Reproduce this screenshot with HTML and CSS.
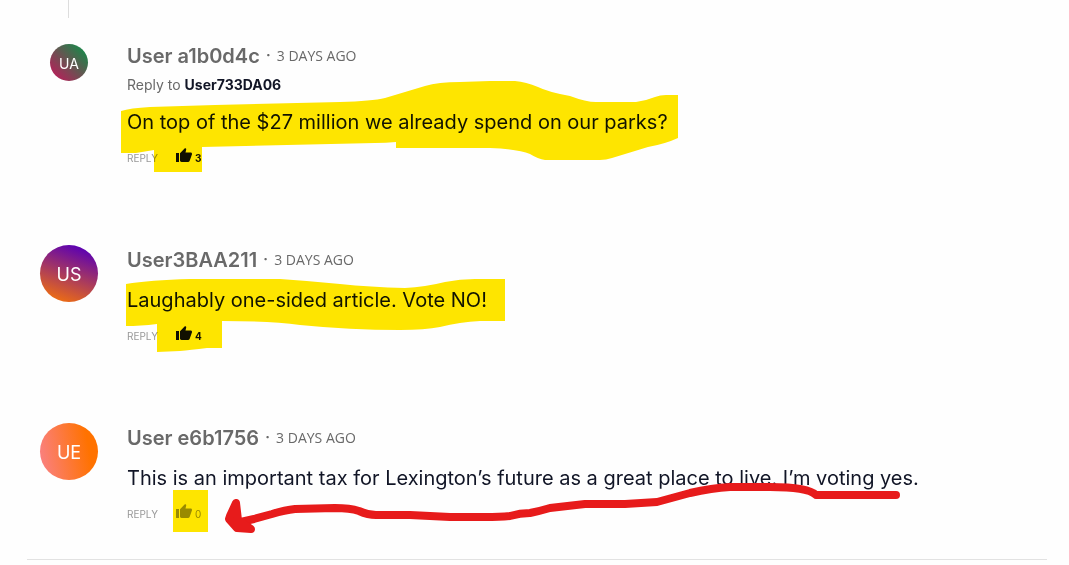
FILE: index.html
```
<!DOCTYPE html>
<html lang="en">
<head>
<meta charset="utf-8" />
<meta name="viewport" content="width=device-width" />
<title>Comments</title>
<link rel="stylesheet" href="styles.css">
</head>
<body>
<svg class="defs" width="0" height="0" aria-hidden="true">
  <symbol id="thumb" viewBox="0 0 16 15">
    <path d="M0 5h3v9H0zM4 5.2 8.6.4C9.300-.2 10.400.5 10.200 1.400L9.500 4.500H14.500C15.700 4.500 16.300 5.600 15.900 6.600L13.700 12.800C13.400 13.600 12.800 14 12 14H5.500C4.700 14 4 13.400 4 12.600z"/>
  </symbol>
</svg>
<section id="wrapper">
  <article class="comment reply">
    <div class="side"><span class="avatar small green">UA</span></div>
    <div class="body">
      <header><h3>User a1b0d4c</h3><span class="dot">·</span><time>3 DAYS AGO</time></header>
      <p class="to">Reply to <b>User733DA06</b></p>
      <p class="text">On top of the $27 million we already spend on our parks?</p>
      <footer>
        <button class="answer">REPLY</button>
        <button class="like"><svg aria-label="Like"><use href="#thumb"/></svg><span>3</span></button>
      </footer>
    </div>
  </article>
  <article class="comment">
    <div class="side"><span class="avatar purple">US</span></div>
    <div class="body">
      <header><h3>User3BAA211</h3><span class="dot">·</span><time>3 DAYS AGO</time></header>
      <p class="text">Laughably one-sided article. Vote NO!</p>
      <footer>
        <button class="answer">REPLY</button>
        <button class="like"><svg aria-label="Like"><use href="#thumb"/></svg><span>4</span></button>
      </footer>
    </div>
  </article>
  <article class="comment">
    <div class="side"><span class="avatar orange">UE</span></div>
    <div class="body">
      <header><h3>User e6b1756</h3><span class="dot">·</span><time>3 DAYS AGO</time></header>
      <p class="text">This is an important tax for Lexington’s future as a great place to live. I’m voting yes.</p>
      <footer>
        <button class="answer">REPLY</button>
        <button class="like none"><svg aria-label="Like"><use href="#thumb"/></svg><span>0</span></button>
      </footer>
    </div>
  </article>
</section>

<!-- marker strokes over the comments -->
<svg class="ink marker" aria-hidden="true">
  <path d="M121 111Q130 108 150 107L215 105L340 102Q372 101 385 98L425 86Q438 82 460 82L490 81H515Q526 82 538 87Q548 92 570 96Q586 102 596 102H636Q645 101 655 97Q660 95 666 95H678V138Q665 144 648 147L612 158Q606 160 600 160H545Q538 159 530 154Q518 149 490 148H396V142Q386 143 375 143L202 147V172H154V150L136 153H121Z"/>
  <path d="M126 284Q150 280 190 279H280Q310 281 340 284Q370 287 405 288Q425 287 445 282Q460 279 475 279H505V321H480Q460 322 440 327Q425 330 400 330Q350 330 300 325Q270 321 222 321V348H207Q190 350 180 351L157 352V324Q140 326 126 326Z"/>
  <path d="M173 490H208V532H173Z"/>
</svg>
<svg class="ink pen" aria-hidden="true">
  <path d="M896 495H816Q808 487 770 487H730Q712 488 690 493L657 502L625 504H585L550 508Q540 511 530 513Q520 513 510 516Q500 517 485 517L450 517L410 515H376Q368 515 359 511Q350 508 335 508L295 509Q285 510 272 514L254 519L236 523"/>
  <path class="head" d="M236 503L230 516L229 519L237 528L251 529L238 520Z"/>
</svg>
</body>
</html>
```
FILE: styles.css
```
body {
  position: relative;
  margin: 0;
  background: #fefefe;
  color: #111526;
  font: normal 14px/20px Inter, "Liberation Sans", sans-serif;
}

.defs {
  position: absolute;
}

#wrapper {
  margin: 0 22px 0 27px;
  padding-bottom: 35px;
  border-bottom: 1px solid #e2e2e2;
}

.comment {
  display: flex;
  gap: 16px;
  padding-top: 77px;
}

.comment.reply {
  padding-top: 0;
}

.side {
  flex: none;
  display: flex;
  flex-direction: column;
  align-items: center;
  width: 84px;
}

/* thread line running down to a reply */
.reply .side:before {
  content: "";
  width: 1px;
  height: 18px;
  margin-bottom: 26px;
  border-left: 1px solid #ddd;
}

.reply .body {
  padding-top: 44px;
}

.body {
  flex: 1;
  padding-top: 3px;
}

.avatar {
  width: 58px;
  height: 57px;
  border-radius: 50%;
  color: #fff;
  font-size: 18px;
  line-height: 60px;
  text-align: center;
}

.avatar.small {
  width: 38px;
  height: 37px;
  font-size: 14px;
  line-height: 40px;
}

.green {
  background: linear-gradient(45deg, #c2185b 5%, #0c9048 95%);
}

.purple {
  background: linear-gradient(20deg, #ff7a00, #5a00b4 90%);
}

.orange {
  background: linear-gradient(80deg, #fa8080 5%, #ff7200 80%);
}

header {
  display: flex;
  align-items: center;
  height: 24px;
  color: #696969;
}

h3 {
  margin: 0;
  font-size: 20px;
  font-weight: 600;
  line-height: 24px;
}

.dot {
  width: 17px;
  padding-bottom: 3px;
  text-align: center;
  font-weight: bold;
}

time {
  font-family: "Open Sans", sans-serif;
}

p {
  margin: 0;
}

.to {
  margin-top: 7px;
  color: #696969;
  line-height: 19px;
}

.to b {
  color: #111526;
}

.text {
  margin: 14px 0 12px;
  font-size: 20px;
  line-height: 28px;
}

footer {
  display: flex;
  align-items: center;
  gap: 18px;
  height: 20px;
}

button {
  padding: 0;
  border: 0;
  background: none;
  font: normal 10px/20px Inter, "Liberation Sans", sans-serif;
}

.answer {
  color: #999;
}

.like {
  display: flex;
  align-items: center;
  gap: 3px;
  color: #111;
  font-weight: bold;
}

.like svg {
  width: 16px;
  height: 15px;
  margin-bottom: 5px;
  fill: currentColor;
}

.like.none {
  color: #999;
  font-weight: normal;
}

.ink {
  position: absolute;
  top: 0;
  left: 0;
  width: 100%;
  height: 100%;
  pointer-events: none;
}

.marker {
  fill: #ffe600;
  mix-blend-mode: multiply;
}

.pen {
  fill: none;
  stroke: #e71b1b;
  stroke-width: 8;
  stroke-linecap: round;
  stroke-linejoin: round;
}

.pen .head {
  fill: #e71b1b;
}
```
